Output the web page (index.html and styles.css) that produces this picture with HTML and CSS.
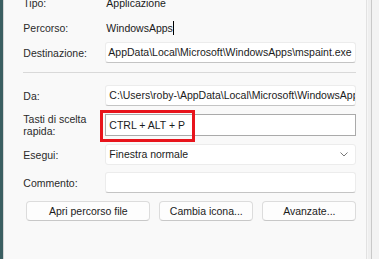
FILE: index.html
```html
<!DOCTYPE html>
<html lang="it">
<head>
    <meta charset="UTF-8">
    <title>Proprietà collegamento</title>
    <link rel="stylesheet" href="styles.css">
</head>
<body>
    <div class="window">
        <div class="desk"></div>
        <div class="page">
            <div class="form top">
                <div class="label">Tipo:</div>
                <div class="value">Applicazione</div>

                <div class="label">Percorso:</div>
                <div class="value">WindowsApps<span class="caret"></span></div>

                <div class="label">Destinazione:</div>
                <div class="field clip">AppData\Local\Microsoft\WindowsApps\mspaint.exe</div>
            </div>

            <hr class="sep">

            <div class="form">
                <div class="label">Da:</div>
                <div class="field">C:\Users\roby-\AppData\Local\Microsoft\WindowsApps</div>

                <div class="label two">Tasti di scelta rapida:</div>
                <div class="hotkey">
                    <div class="field boxed">CTRL + ALT + P</div>
                    <div class="mark"></div>
                </div>

                <div class="label">Esegui:</div>
                <div class="field select">
                    <span>Finestra normale</span>
                    <svg width="8" height="5" viewBox="0 0 8 5"><path d="M0.5 0.5 L4 4 L7.5 0.5" fill="none" stroke="#777" stroke-width="1"/></svg>
                </div>

                <div class="label">Commento:</div>
                <div class="field"></div>
            </div>

            <div class="buttons">
                <button class="btn wide">Apri percorso file</button>
                <button class="btn">Cambia icona...</button>
                <button class="btn">Avanzate...</button>
            </div>
        </div>
        <div class="side"></div>
    </div>
</body>
</html>
```

FILE: styles.css
```css
body {
    margin: 0;
    font-family: "Liberation Sans", Arial, sans-serif;
    font-size: 10.5px;
    color: #1b1b1b;
    overflow: hidden;
}

.window {
    display: flex;
    height: 259px;
}

.desk {
    width: 4px;
    background: #3b5f62;
}

.page {
    flex: 1;
    background: #f9f9f9;
    border-left: 1px solid #d6d6d6;
    border-right: 1px solid #e2e2e2;
    padding: 0 10px 0 19px;
}

.side {
    width: 13px;
    background: #efefef;
    border-left: 1px solid #f6f6f6;
    box-shadow: inset -7px 0 0 #f3f3f3, inset -8px 0 0 #c9c9c9;
}

.form {
    display: grid;
    grid-template-columns: 82px 1fr;
    row-gap: 7px;
    align-items: center;
}

.form.top {
    margin-top: -10px;
    grid-auto-rows: 25px;
    row-gap: 0;
}

.label {
    color: #2a2a2a;
}

.label.two {
    line-height: 12px;
    width: 70px;
}

.value {
    padding-left: 1px;
}

.caret {
    display: inline-block;
    width: 1px;
    height: 14px;
    background: #000;
    vertical-align: -3px;
}

.field {
    height: 19px;
    line-height: 19px;
    background: #fff;
    border: 1px solid #ececec;
    border-bottom-color: #c4c4c4;
    border-radius: 3px;
    padding: 0 3px;
    white-space: nowrap;
    overflow: hidden;
}

.field.clip {
    direction: rtl;
    text-align: left;
    padding: 0 2px;
}

.field.boxed {
    height: 20px;
    line-height: 20px;
    border: 1px solid #aaaaaa;
    border-radius: 0;
}

.hotkey {
    position: relative;
}

.mark {
    position: absolute;
    left: -5px;
    top: -4px;
    width: 89px;
    height: 26px;
    border: 3px solid #e8141c;
}

.select {
    display: flex;
    justify-content: space-between;
    align-items: center;
    padding-right: 7px;
    border-bottom-color: #ececec;
}

.sep {
    border: none;
    border-top: 1px solid #d9d9d9;
    margin: 7px 0 12px;
}

.buttons {
    display: flex;
    gap: 9px;
    margin: 8px 0 0 3px;
}

.btn {
    font: inherit;
    color: #1b1b1b;
    height: 20px;
    width: 94px;
    background: #fdfdfd;
    border: 1px solid #dcdcdc;
    border-bottom-color: #c8c8c8;
    border-radius: 4px;
    padding: 0;
}

.btn.wide {
    width: 124px;
}
```
